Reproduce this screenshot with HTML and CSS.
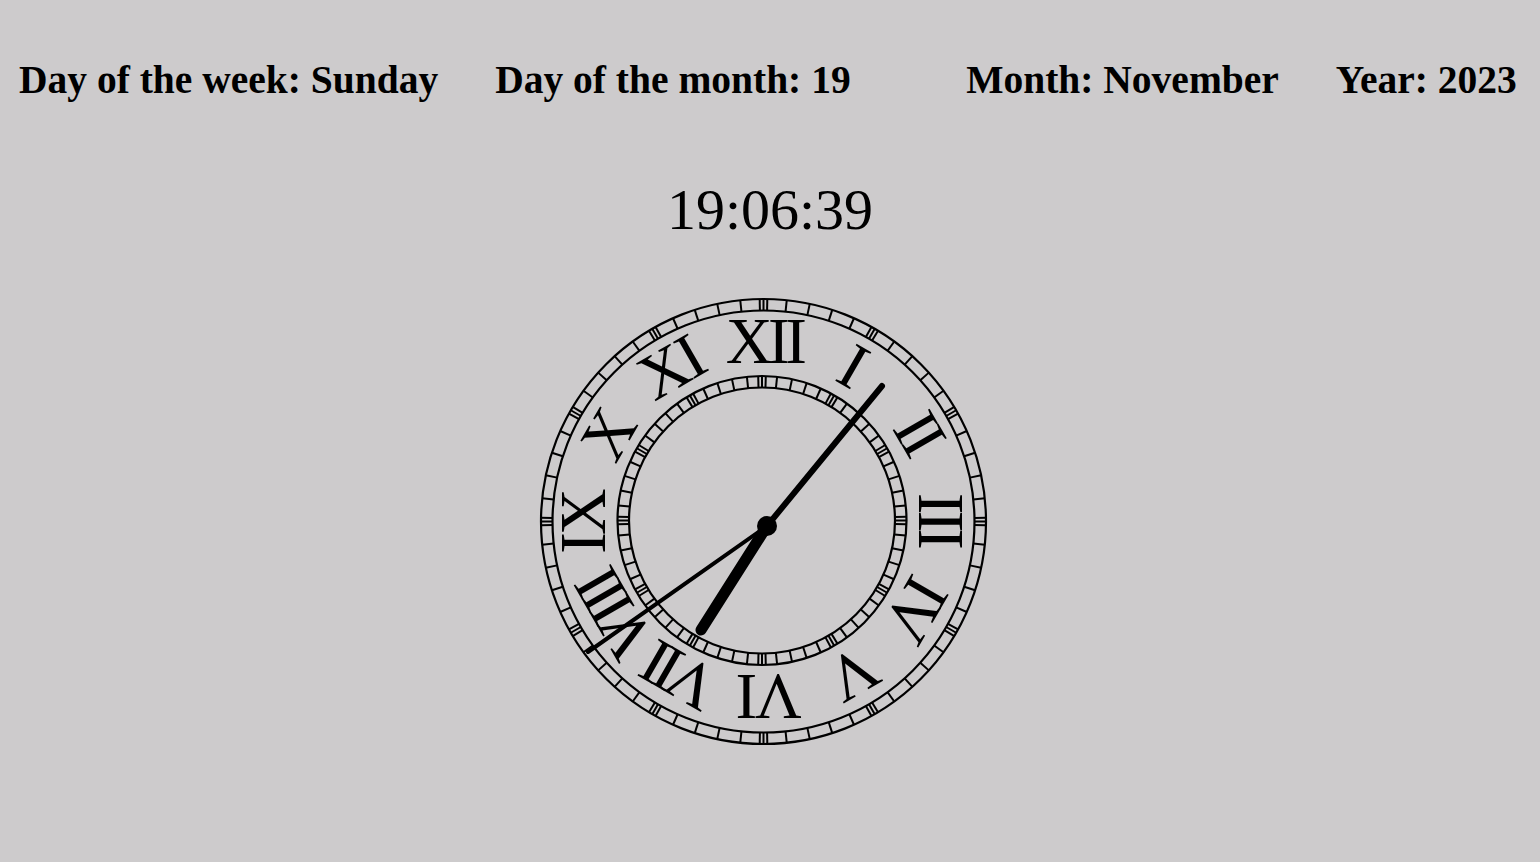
FILE: index.html
```html
<!DOCTYPE html>
<html lang="en">
<head>
  <meta charset="UTF-8">
  <meta name="viewport" content="width=device-width, initial-scale=1.0">
  <title>Clock</title>
  <link rel="stylesheet" href="styles.css">
</head>
<body>

<header class="date-bar">
  <span class="date-item">Day of the week: Sunday</span>
  <span class="date-item date-item-month-day">Day of the month: 19</span>
  <span class="date-item">Month: November</span>
  <span class="date-item">Year: 2023</span>
</header>

<div class="time">19:06:39</div>

<div class="clock-wrap">
  <svg class="clock" viewBox="530 290 470 470" width="470" height="470">
    <g id="face"></g>
    <g id="numerals"></g>
    <line class="hand hand-hour" x1="767" y1="525" x2="701" y2="629"></line>
    <line class="hand hand-minute" x1="767" y1="525" x2="882" y2="385"></line>
    <line class="hand hand-second" x1="767" y1="525" x2="588" y2="651"></line>
    <circle class="hub" cx="767" cy="525" r="10"></circle>
  </svg>
</div>

<script src="clock.js"></script>

</body>
</html>
```

FILE: styles.css
```css
body {
  font-family: "Liberation Serif", "Times New Roman", serif;
  margin: 0;
  padding: 0;
  background-color: #cdcbcc;
  color: #000;
  overflow: hidden;
}
.date-bar {
  display: flex;
  gap: 57px;
  padding: 57px 0 0 19px;
}
.date-item {
  font-size: 39.5px;
  font-weight: bold;
  white-space: nowrap;
}
.date-item-month-day {
  width: 414px;
}
.time {
  font-size: 58px;
  line-height: 66px;
  margin-top: 74px;
  text-align: center;
}
.clock-wrap {
  display: flex;
  justify-content: center;
  margin-top: 48px;
  padding-right: 10px;
}
.clock {
  display: block;
}
.ring {
  fill: none;
  stroke: #000;
  stroke-width: 2.2;
}
.tick {
  stroke: #000;
  stroke-width: 2;
}
.numeral {
  font-family: "Liberation Serif", "Times New Roman", serif;
  font-size: 65px;
  text-anchor: middle;
}
.hand {
  stroke: #000;
  stroke-linecap: round;
}
.hand-hour {
  stroke-width: 11;
}
.hand-minute {
  stroke-width: 6;
}
.hand-second {
  stroke-width: 4;
}
.hub {
  fill: #000;
}
```

FILE: clock.js
```js
var SVG_NS = 'http://www.w3.org/2000/svg';
var face = document.getElementById('face');
var numerals = document.getElementById('numerals');

function drawBand(cx, cy, outer, inner) {
  var rings = [outer, inner];
  for (var i = 0; i < rings.length; i++) {
    var ring = document.createElementNS(SVG_NS, 'circle');
    ring.setAttribute('class', 'ring');
    ring.setAttribute('cx', cx);
    ring.setAttribute('cy', cy);
    ring.setAttribute('r', rings[i]);
    face.appendChild(ring);
  }

  for (var m = 0; m < 60; m++) {
    // the hour marks are three close lines, the others just one
    var offsets = m % 5 === 0 ? [-3.8, 0, 3.8] : [0];
    for (var j = 0; j < offsets.length; j++) {
      var a = (m * 6) * Math.PI / 180 + offsets[j] / outer;
      var tick = document.createElementNS(SVG_NS, 'line');
      tick.setAttribute('class', 'tick');
      tick.setAttribute('x1', cx + Math.sin(a) * inner);
      tick.setAttribute('y1', cy - Math.cos(a) * inner);
      tick.setAttribute('x2', cx + Math.sin(a) * outer);
      tick.setAttribute('y2', cy - Math.cos(a) * outer);
      face.appendChild(tick);
    }
  }
}

function drawNumerals(cx, cy, r) {
  // dx, dy nudge each numeral, the face is not quite regular
  var items = [
    { name: 'XII', dx: 1, dy: -1, spacing: -4.5 },
    { name: 'I', dx: 2, dy: 0, spacing: 0 },
    { name: 'II', dx: 2.5, dy: 1, spacing: -4.5 },
    { name: 'III', dx: 0, dy: 0, spacing: -4 },
    { name: 'IV', dx: 0.5, dy: 0, spacing: -4.5 },
    { name: 'V', dx: 1.5, dy: 1, spacing: 0 },
    { name: 'VI', dx: 7, dy: 0, spacing: -2.5 },
    { name: 'VII', dx: 7.5, dy: 4, spacing: -7 },
    { name: 'VIII', dx: 6, dy: 8, spacing: -6 },
    { name: 'IX', dx: -2.5, dy: 3, spacing: -3 },
    { name: 'X', dx: -1, dy: 3, spacing: 0 },
    { name: 'XI', dx: -4, dy: 1.5, spacing: -3 }
  ];
  for (var i = 0; i < items.length; i++) {
    var text = document.createElementNS(SVG_NS, 'text');
    text.setAttribute('class', 'numeral');
    text.setAttribute('transform', 'translate(' + (cx + items[i].dx) + ' ' + (cy + items[i].dy) + ') rotate(' + i * 30 + ') translate(0 ' + (-r + 21.5) + ')');
    text.style.letterSpacing = items[i].spacing + 'px';
    text.textContent = items[i].name;
    numerals.appendChild(text);
  }
}

drawBand(763.5, 520.5, 222.5, 211);
drawBand(762, 519.5, 144.5, 133);
drawNumerals(763, 518.5, 177);
```
